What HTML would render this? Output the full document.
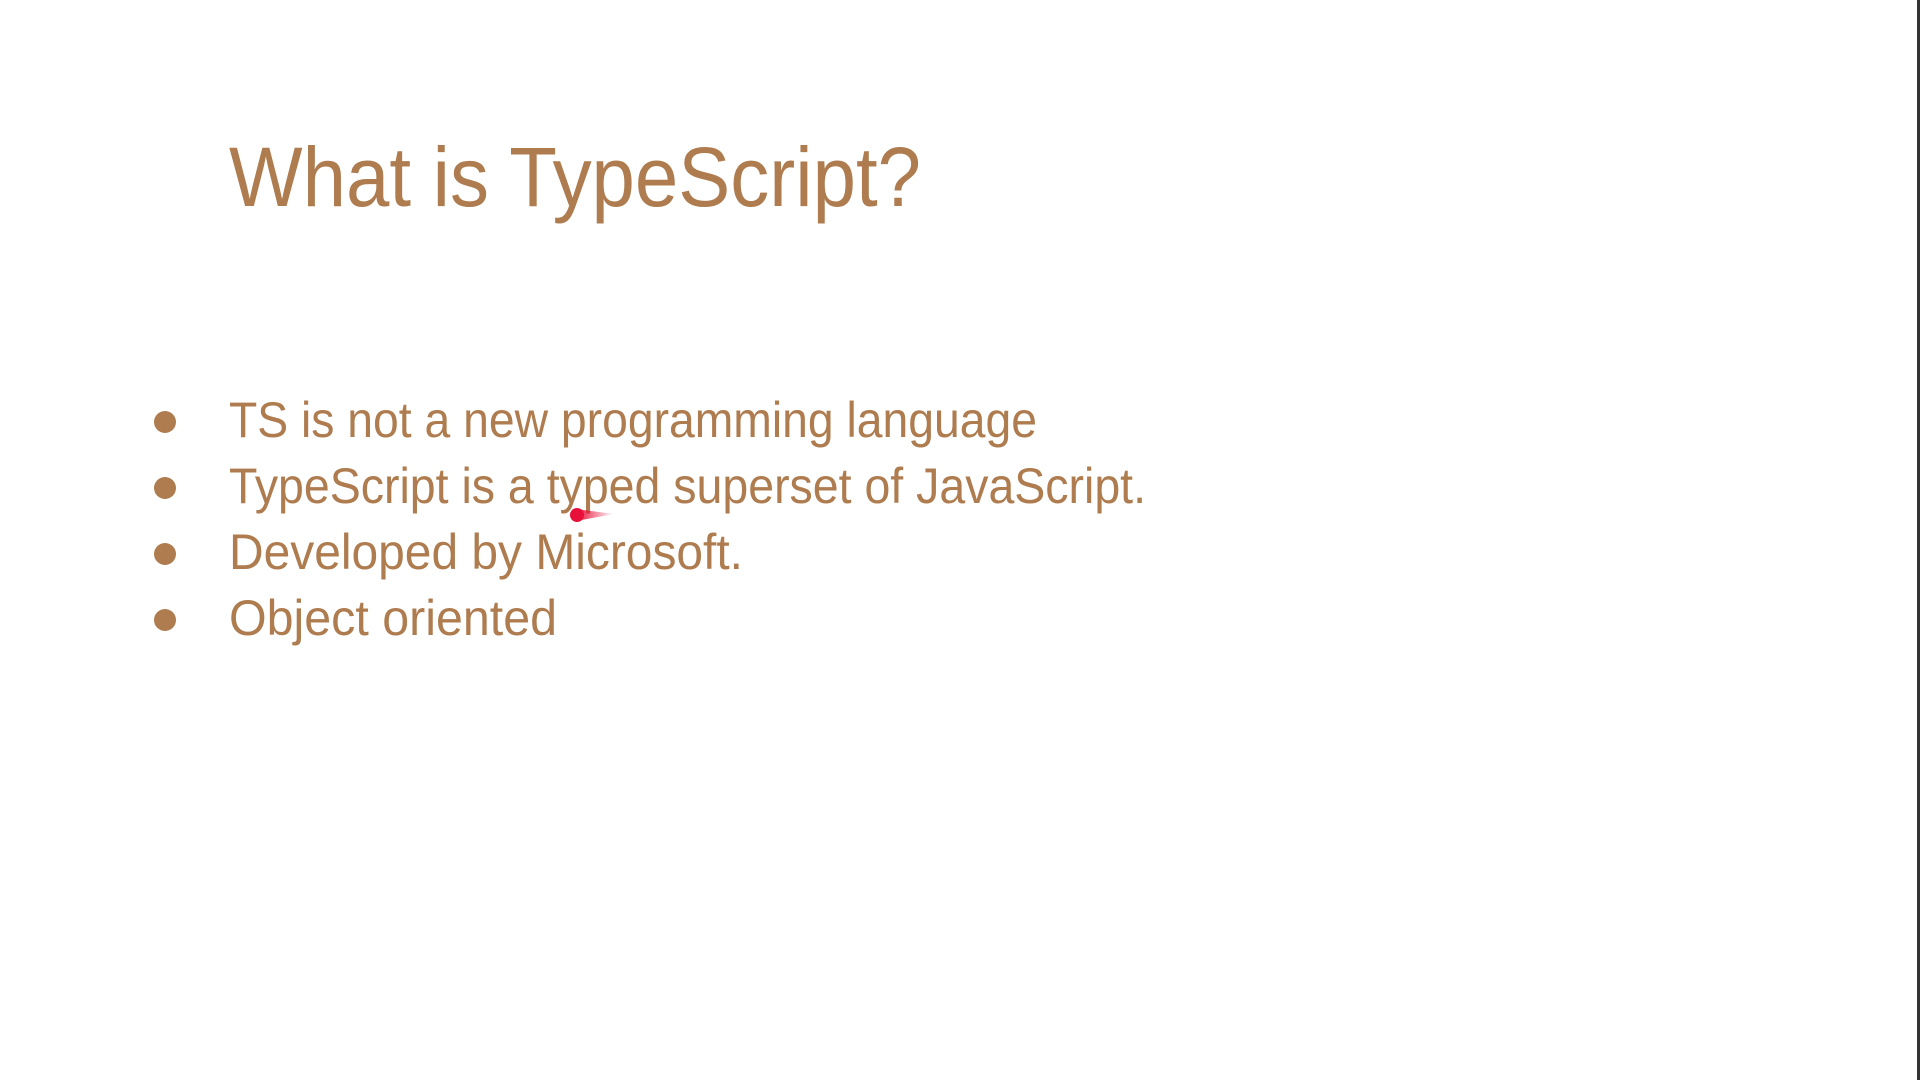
<!DOCTYPE html>
<html><head><meta charset="utf-8"><style>
html,body{margin:0;padding:0;background:#fff;width:1920px;height:1080px;overflow:hidden}
svg{display:block}
text{font-family:"Liberation Sans",sans-serif;fill:#ae7c4f}
</style></head><body>
<svg width="1920" height="1080" viewBox="0 0 1920 1080">
<rect width="1920" height="1080" fill="#fff"/>
<text x="229" y="206" font-size="84" textLength="692" lengthAdjust="spacingAndGlyphs">What is TypeScript?</text>
<g font-size="50">
<text x="229" y="437" textLength="808" lengthAdjust="spacingAndGlyphs">TS is not a new programming language</text>
<text x="229" y="503" textLength="917" lengthAdjust="spacingAndGlyphs">TypeScript is a typed superset of JavaScript.</text>
<text x="229" y="569" textLength="514" lengthAdjust="spacingAndGlyphs">Developed by Microsoft.</text>
<text x="229" y="635" textLength="328" lengthAdjust="spacingAndGlyphs">Object oriented</text>
</g>
<g fill="#ae7c4f">
<circle cx="165" cy="422" r="11"/>
<circle cx="165" cy="488" r="11"/>
<circle cx="165" cy="554" r="11"/>
<circle cx="165" cy="620" r="11"/>
</g>
<defs><linearGradient id="g" x1="0" x2="1"><stop offset="0" stop-color="#e8103a"/><stop offset="1" stop-color="#e8103a" stop-opacity="0"/></linearGradient></defs>
<path d="M576 509 L614 514 L576 521 Z" fill="url(#g)"/>
<circle cx="577" cy="515" r="7" fill="#e8103a"/>
<rect x="1917" y="0" width="3" height="1080" fill="#333"/>
</svg>
</body></html>
